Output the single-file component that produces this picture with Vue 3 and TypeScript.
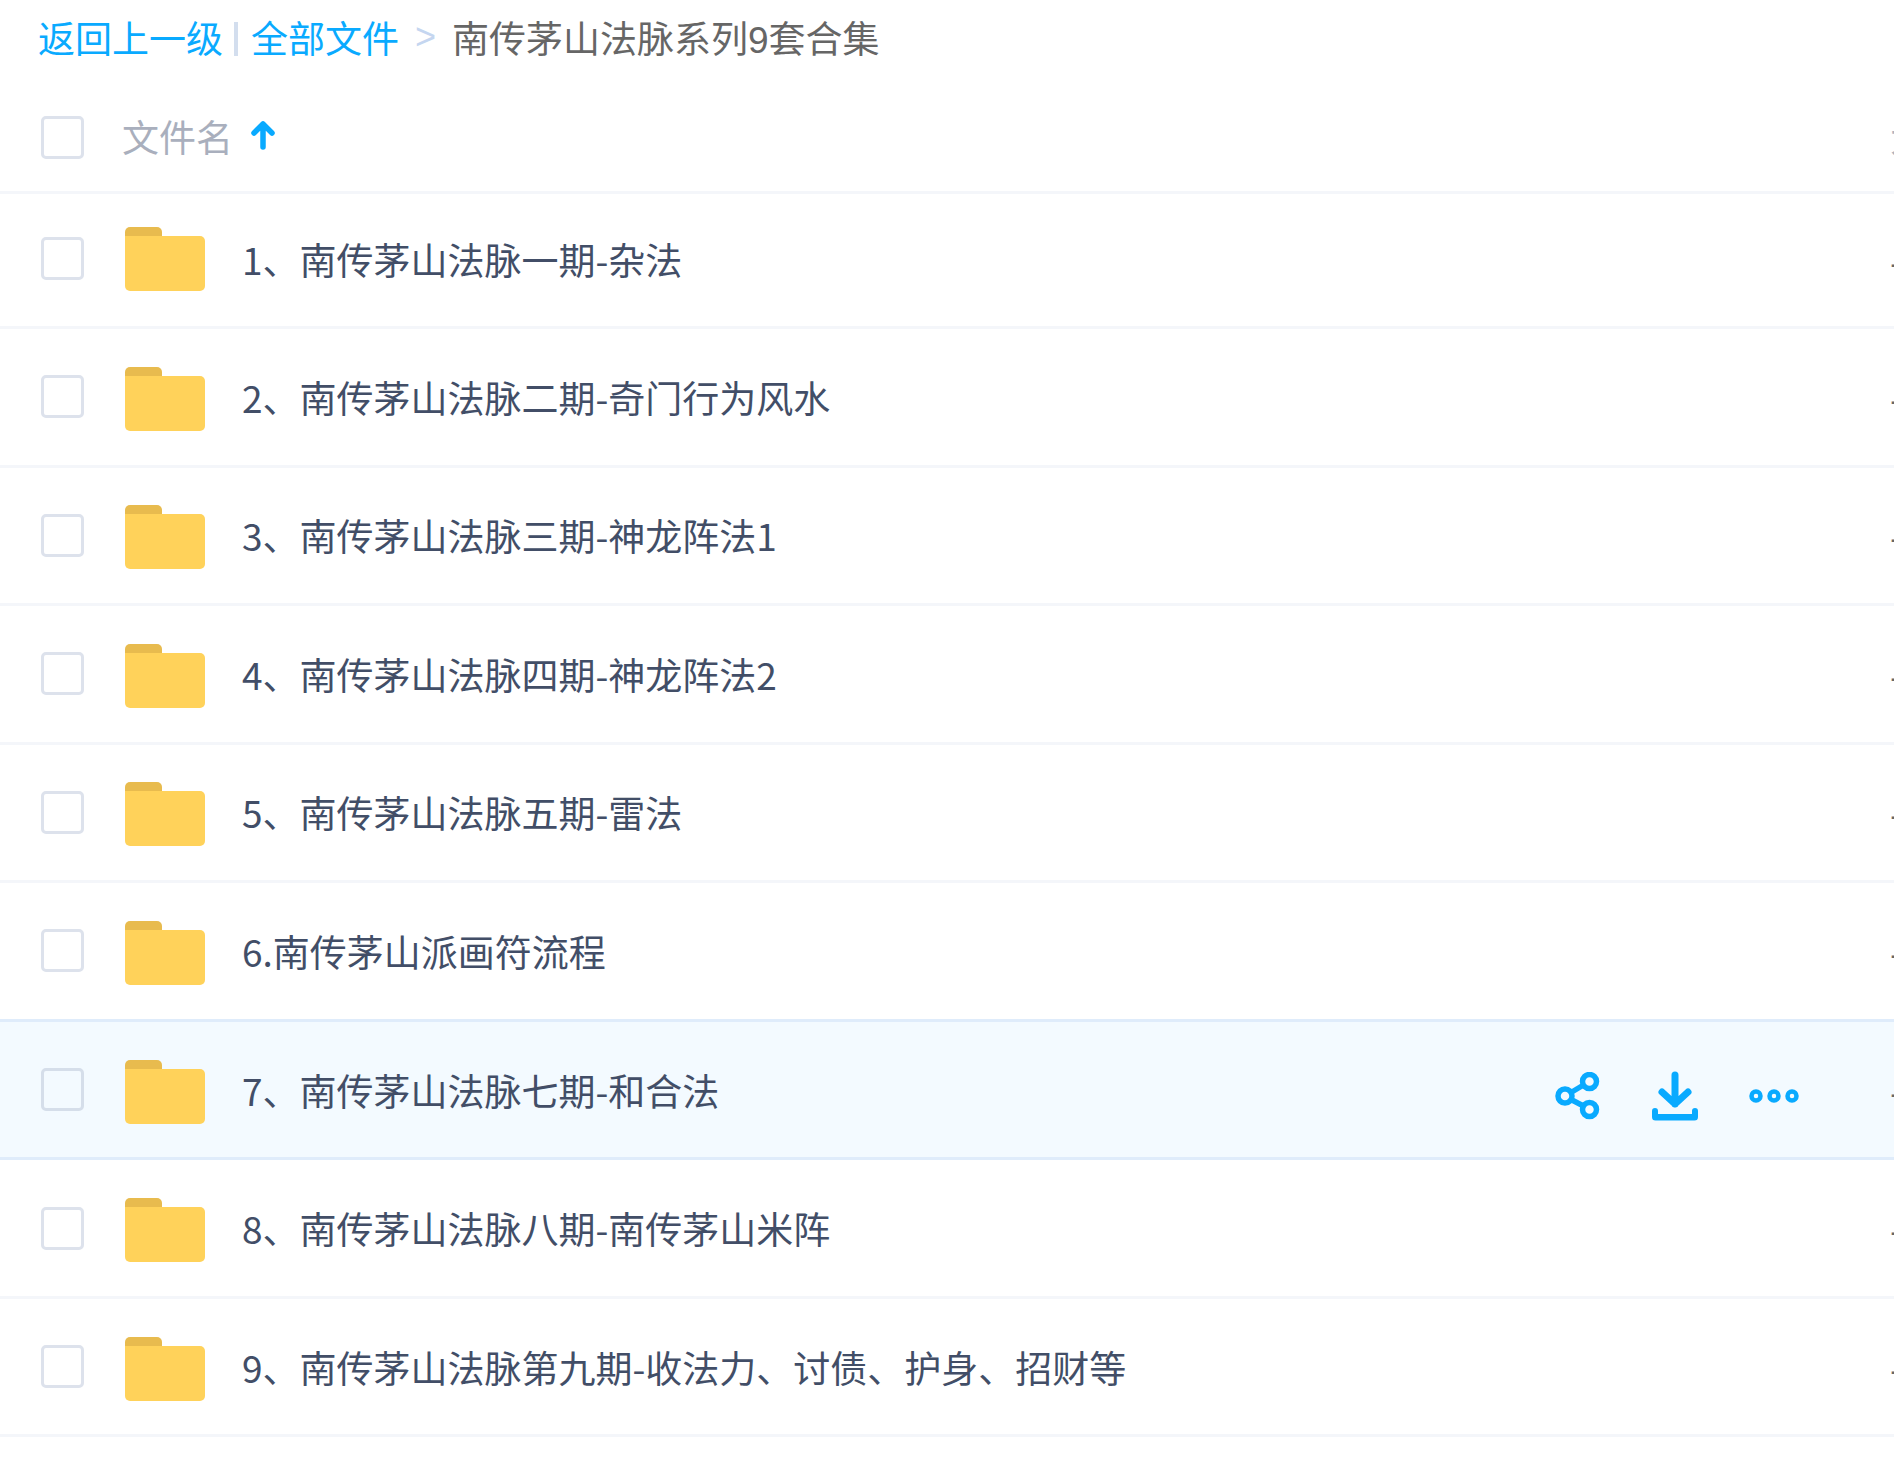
<script setup lang="ts">
const rows: string[] = [
  '1、南传茅山法脉一期-杂法',
  '2、南传茅山法脉二期-奇门行为风水',
  '3、南传茅山法脉三期-神龙阵法1',
  '4、南传茅山法脉四期-神龙阵法2',
  '5、南传茅山法脉五期-雷法',
  '6.南传茅山派画符流程',
  '7、南传茅山法脉七期-和合法',
  '8、南传茅山法脉八期-南传茅山米阵',
  '9、南传茅山法脉第九期-收法力、讨债、护身、招财等',
]
const activeIndex = 6
</script>

<template>
  <div class="page">
    <div class="crumbs">
      <a class="link">返回上一级</a>
      <span class="bar"></span>
      <a class="link">全部文件</a>
      <span class="gt">&gt;</span>
      <span class="current">南传茅山法脉系列9套合集</span>
    </div>
    <div class="head">
      <span class="check"></span>
      <span class="head-name">文件名</span>
      <svg class="sort" viewBox="0 0 24 30" width="24" height="30">
        <path d="M12 27V4M3 13l9-9 9 9" fill="none" stroke="#09aaff" stroke-width="5.500" stroke-linecap="round" stroke-linejoin="round" />
      </svg>
      <span class="edge">大</span>
    </div>
    <div v-for="(name, i) in rows" :key="name" class="row" :class="{ active: i === activeIndex, first: i === 0 }">
      <span class="check"></span>
      <svg class="folder" viewBox="0 0 80 65" width="80" height="65">
        <path d="M0 6a5 5 0 0 1 5-5h27a5 5 0 0 1 5 5v6H0z" fill="#e8bb4e" />
        <path d="M0 10h75a5 5 0 0 1 5 5v45a5 5 0 0 1-5 5H5a5 5 0 0 1-5-5z" fill="#ffd25a" />
      </svg>
      <span class="name">{{ name }}</span>
      <div v-if="i === activeIndex" class="actions">
        <svg viewBox="0 0 46 48" width="46" height="48">
          <g fill="none" stroke="#09aaff" stroke-width="5.500">
            <circle cx="34.500" cy="9.500" r="7" />
            <circle cx="34.500" cy="37.500" r="7" />
            <circle cx="10" cy="24" r="7" />
            <path d="M16 20.500l12.500-7.500M16 27.500l12.500 6.500" />
          </g>
        </svg>
        <svg viewBox="0 0 46 50" width="46" height="50">
          <g fill="none" stroke="#09aaff" stroke-width="7" stroke-linecap="round" stroke-linejoin="round">
            <path d="M23 4v29M10 21l13 12 13-12" />
          </g>
          <path d="M3 37a3 3 0 0 1 3 3v3h34v-3a3 3 0 0 1 6 0v6a3.500 3.500 0 0 1-3.500 3.500H3.500A3.500 3.500 0 0 1 0 46v-6a3 3 0 0 1 3-3z" fill="#09aaff" />
        </svg>
        <svg class="dots" viewBox="0 0 50 14" width="50" height="14">
          <g fill="none" stroke="#09aaff" stroke-width="4.500">
            <circle cx="7" cy="7" r="4.500" />
            <circle cx="25" cy="7" r="4.500" />
            <circle cx="43" cy="7" r="4.500" />
          </g>
        </svg>
      </div>
      <span class="edge">-</span>
    </div>
  </div>
</template>

<style scoped>
.page {
  width: 1894px;
  height: 1459px;
  overflow: hidden;
  background: #fff;
  font-family: "Liberation Sans", "Noto Sans CJK SC", sans-serif;
}
.crumbs {
  height: 81px;
  box-sizing: border-box;
  padding: 0 0 7px 38px;
  display: flex;
  align-items: center;
  font-size: 37px;
  color: #666;
}
.link {
  color: #09aaff;
}
.bar {
  width: 4px;
  height: 34px;
  margin: 4px 13px 0 11px;
  background: #d3deee;
}
.gt {
  margin: 0 16px 0 16px;
  color: #c5d6f0;
  font-size: 36px;
}
.head {
  height: 110px;
  display: flex;
  align-items: center;
  position: relative;
  padding-left: 41px;
  border-bottom: 3px solid #f4f6fa;
}
.check {
  width: 43px;
  height: 43px;
  flex: none;
  box-sizing: border-box;
  border: 3px solid #dde2ec;
  border-radius: 5px;
}
.head > .check {
  margin-top: 2px;
}
.head-name {
  margin-left: 38px;
  font-size: 37px;
  color: #a9afbd;
  font-family: "Noto Sans CJK SC", sans-serif;
}
.sort {
  margin-left: 18px;
  margin-top: -3px;
}
.row {
  height: 135.550px;
  display: flex;
  align-items: center;
  position: relative;
  padding-left: 41px;
  border-bottom: 3px solid #f4f6fa;
}
.row.first {
  height: 129px;
  padding-bottom: 3px;
}
.row.active {
  background: #f3faff;
  border-top: 3px solid #dfecfb;
  border-bottom-color: #dfecfb;
  margin-top: -3px;
}
.active .check {
  border-color: #d5deea;
}
.folder {
  margin-left: 41px;
  margin-top: 3px;
  flex: none;
}
.first .folder {
  margin-top: 0;
}
.name {
  margin-left: 37px;
  font-size: 37px;
  color: #424e67;
  font-family: "Noto Sans CJK SC", sans-serif;
}
.actions {
  margin-left: auto;
  margin-right: 95px;
  margin-top: 12px;
  display: flex;
  align-items: center;
  gap: 51px;
}
.edge {
  position: absolute;
  left: 1890px;
  top: 50%;
  transform: translateY(-50%);
  font-size: 37px;
  color: #666;
  font-family: "Noto Sans CJK SC", sans-serif;
}
.head .edge {
  color: #afb3bf;
}
</style>
